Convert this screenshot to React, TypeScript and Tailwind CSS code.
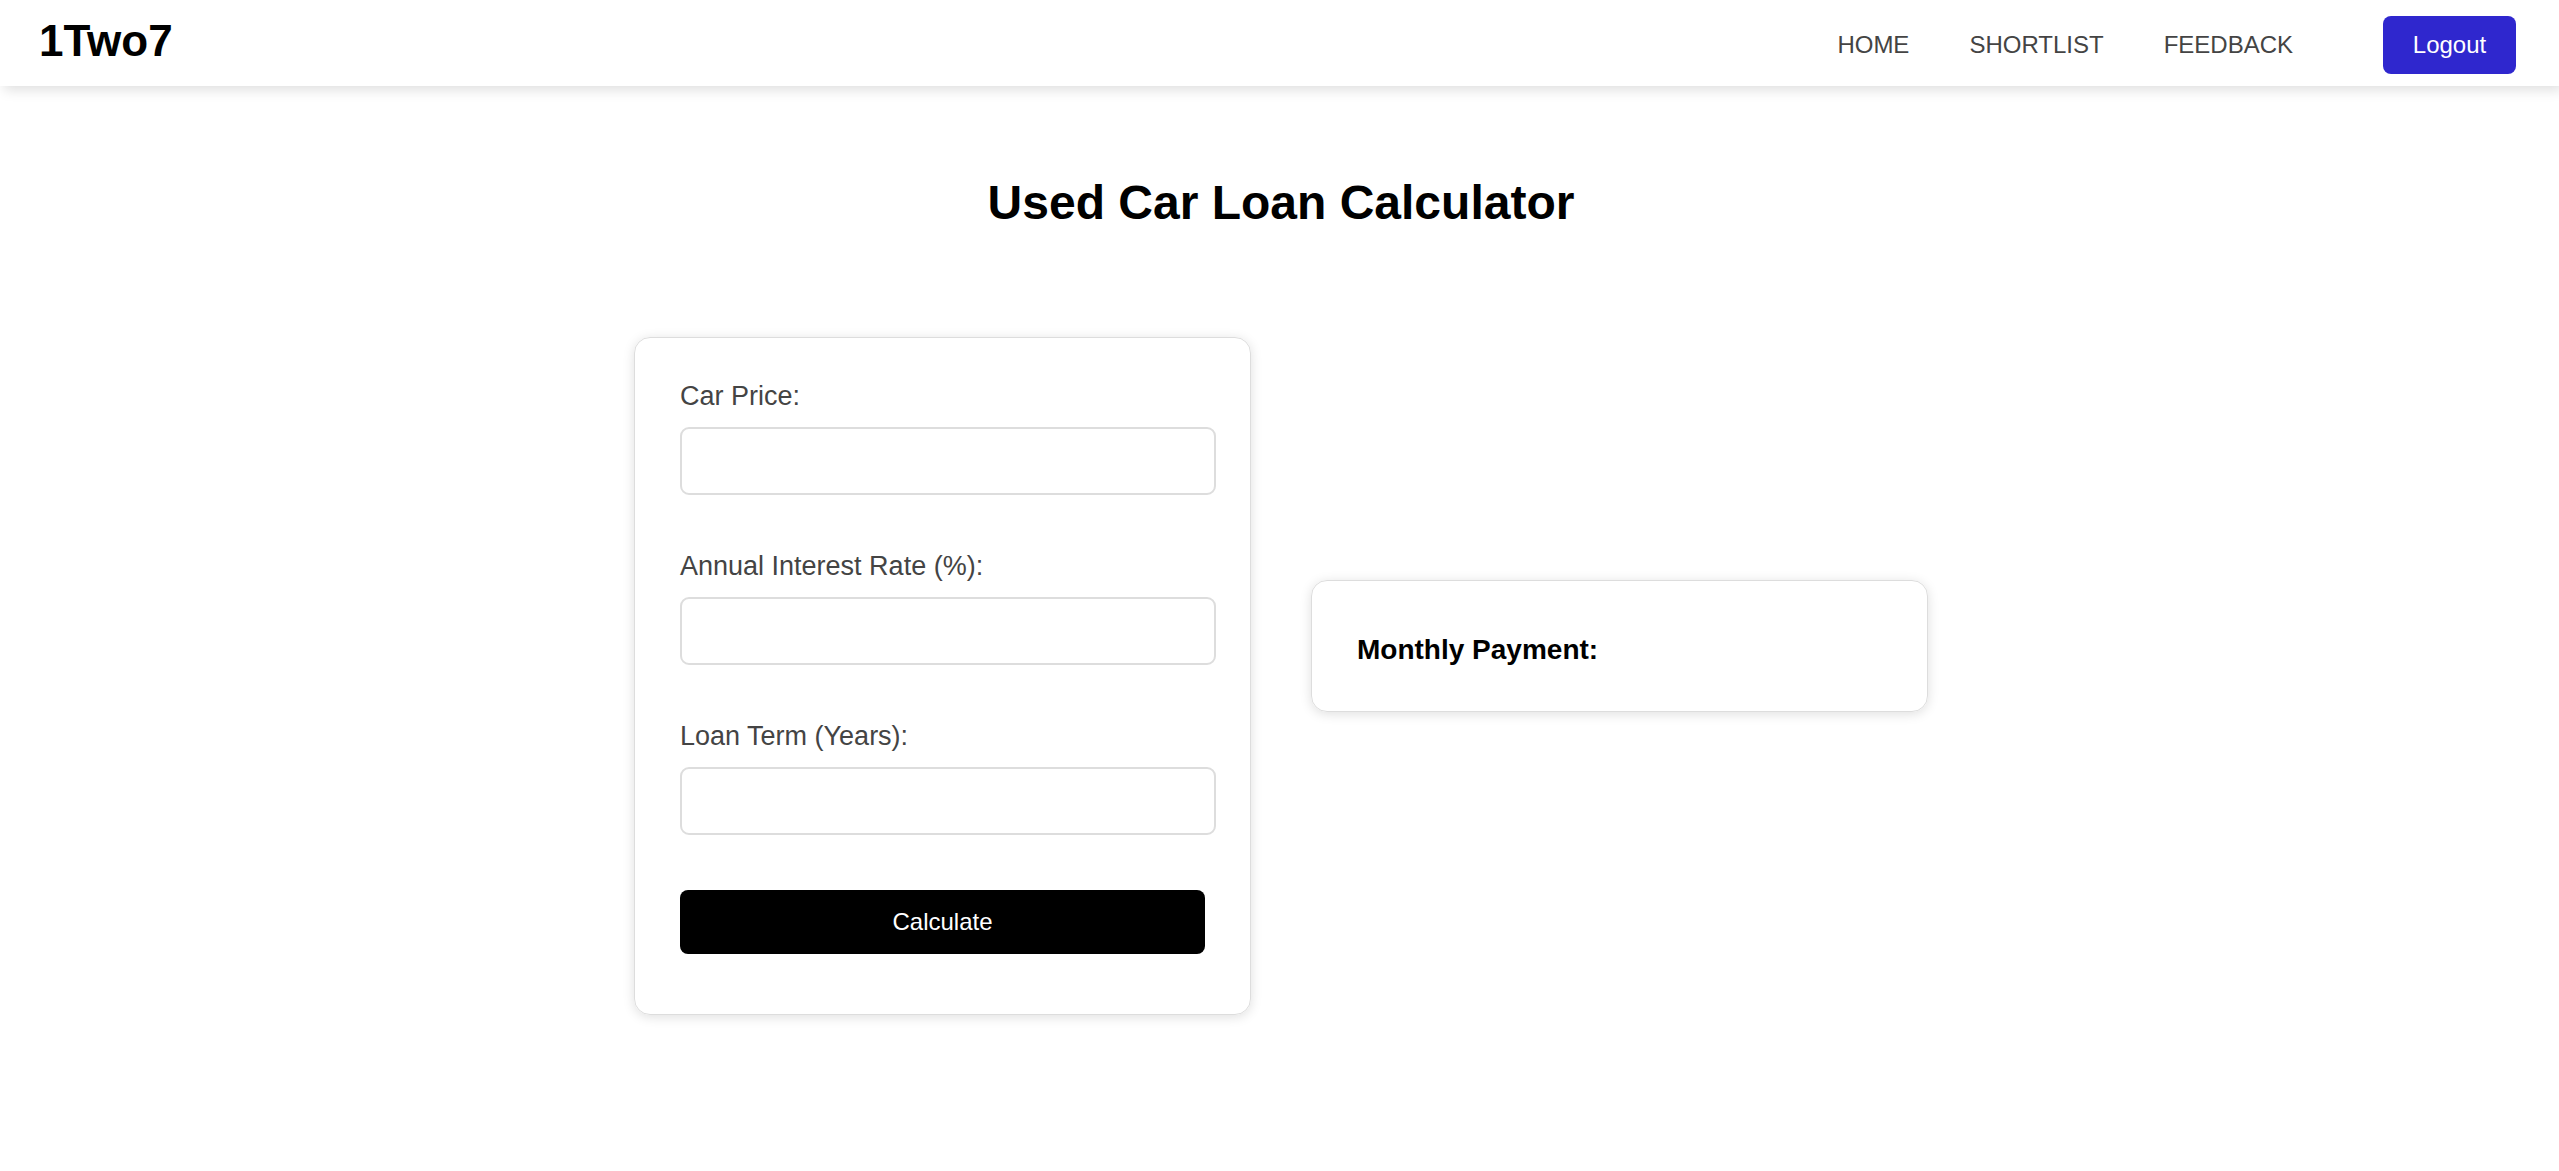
import React from "react";

const fields = [
  { id: "price", label: "Car Price:" },
  { id: "rate", label: "Annual Interest Rate (%):" },
  { id: "term", label: "Loan Term (Years):" },
];

const links = ["HOME", "SHORTLIST", "FEEDBACK"];

export default function App() {
  return (
    <div className="font-['Liberation_Sans',Arial,sans-serif] text-black">
      <header className="flex h-[86px] items-center justify-between bg-white pr-[43px] pl-[39px] shadow-[4px_4px_12px_rgba(0,0,0,0.13)]">
        <a href="#" className="pb-1 text-[44px] leading-[52px] font-bold">1Two7</a>
        <nav className="flex items-center pt-1">
          <div className="mr-[90px] flex gap-[60px]">
            {links.map((l) => (
              <a key={l} href="#" className="text-2xl text-[#444]">{l}</a>
            ))}
          </div>
          <button className="h-[58px] w-[133px] rounded-lg bg-[#2f27ce] text-2xl text-white">Logout</button>
        </nav>
      </header>
      <main className="pb-16 pl-[3px]">
        <h1 className="mt-[87px] text-center text-[48px] leading-[60px] font-bold">Used Car Loan Calculator</h1>
        <div className="mx-auto mt-[104px] grid max-w-[1294px] grid-cols-2 items-start gap-[60px]">
          <form className="rounded-2xl border border-[#ddd] px-[45px] pt-[42px] pb-[60px] shadow-[0_2px_12px_rgba(0,0,0,0.13)]">
            {fields.map((f) => (
              <div key={f.id} className="mb-[55px]">
                <label htmlFor={f.id} className="mb-[15px] block text-[27px] leading-8 text-[#444]">{f.label}</label>
                <input id={f.id} className="block h-[68px] w-[calc(100%+11px)] rounded-[9px] border-2 border-[#ddd] px-4 text-2xl" />
              </div>
            ))}
            <button type="button" className="h-16 w-full rounded-lg bg-black text-2xl text-white">Calculate</button>
          </form>
          <section className="mt-[243px] rounded-2xl border border-[#ddd] px-[45px] pt-[53px] pb-[45px] shadow-[0_2px_12px_rgba(0,0,0,0.13)]">
            <h2 className="text-[28px] leading-8 font-bold">Monthly Payment:</h2>
          </section>
        </div>
      </main>
    </div>
  );
}
